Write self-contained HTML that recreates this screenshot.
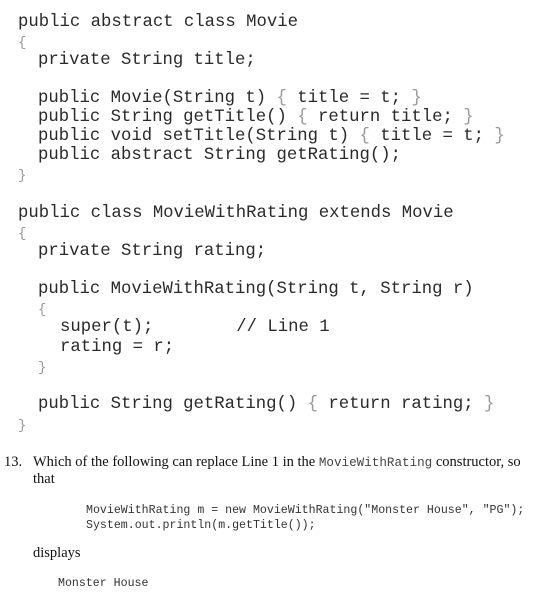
<!DOCTYPE html>
<html><head><style>
body{margin:0;width:535px;height:600px;background:#fff;position:relative;overflow:hidden;color:#2a2a2a}
.c{position:absolute;font-family:"Liberation Mono",monospace;font-size:17.3px;white-space:pre;line-height:20px}
.b{color:#999}
.bb{color:#999;font-size:14px}
.s{position:absolute;font-family:"Liberation Mono",monospace;font-size:11.6px;white-space:pre;line-height:14px;color:#333}
.t{position:absolute;font-family:"Liberation Serif",serif;font-size:14.5px;white-space:pre;line-height:18px;color:#111}
.t code{font-family:"Liberation Mono",monospace;font-size:12.6px;color:#444}
</style></head><body>
<div class="c" style="left:18px;top:13px">public abstract class Movie</div>
<div class="c bb" style="left:18px;top:33px">{</div>
<div class="c" style="left:38px;top:51px">private String title;</div>
<div class="c" style="left:38px;top:89px">public Movie(String t) <span class="b">{</span> title = t; <span class="b">}</span></div>
<div class="c" style="left:38px;top:108px">public String getTitle() <span class="b">{</span> return title; <span class="b">}</span></div>
<div class="c" style="left:38px;top:127px">public void setTitle(String t) <span class="b">{</span> title = t; <span class="b">}</span></div>
<div class="c" style="left:38px;top:146px">public abstract String getRating();</div>
<div class="c bb" style="left:18px;top:166px">}</div>

<div class="c" style="left:18px;top:204px">public class MovieWithRating extends Movie</div>
<div class="c bb" style="left:18px;top:224px">{</div>
<div class="c" style="left:38px;top:242px">private String rating;</div>
<div class="c" style="left:38px;top:280px">public MovieWithRating(String t, String r)</div>
<div class="c bb" style="left:38px;top:300px">{</div>
<div class="c" style="left:60px;top:318px">super(t);        // Line 1</div>
<div class="c" style="left:60px;top:338px">rating = r;</div>
<div class="c bb" style="left:38px;top:358px">}</div>
<div class="c" style="left:38px;top:395px">public String getRating() <span class="b">{</span> return rating; <span class="b">}</span></div>
<div class="c bb" style="left:18px;top:416px">}</div>

<div class="t" style="left:4px;top:453px">13.</div>
<div class="t" style="left:33px;top:453px">Which of the following can replace Line 1 in the <code>MovieWithRating</code> constructor, so</div>
<div class="t" style="left:33px;top:470px">that</div>
<div class="s" style="left:86px;top:504px">MovieWithRating m = new MovieWithRating("Monster House", "PG");</div>
<div class="s" style="left:86px;top:519px">System.out.println(m.getTitle());</div>
<div class="t" style="left:33px;top:544px">displays</div>
<div class="s" style="left:58px;top:577px">Monster House</div>
</body></html>
